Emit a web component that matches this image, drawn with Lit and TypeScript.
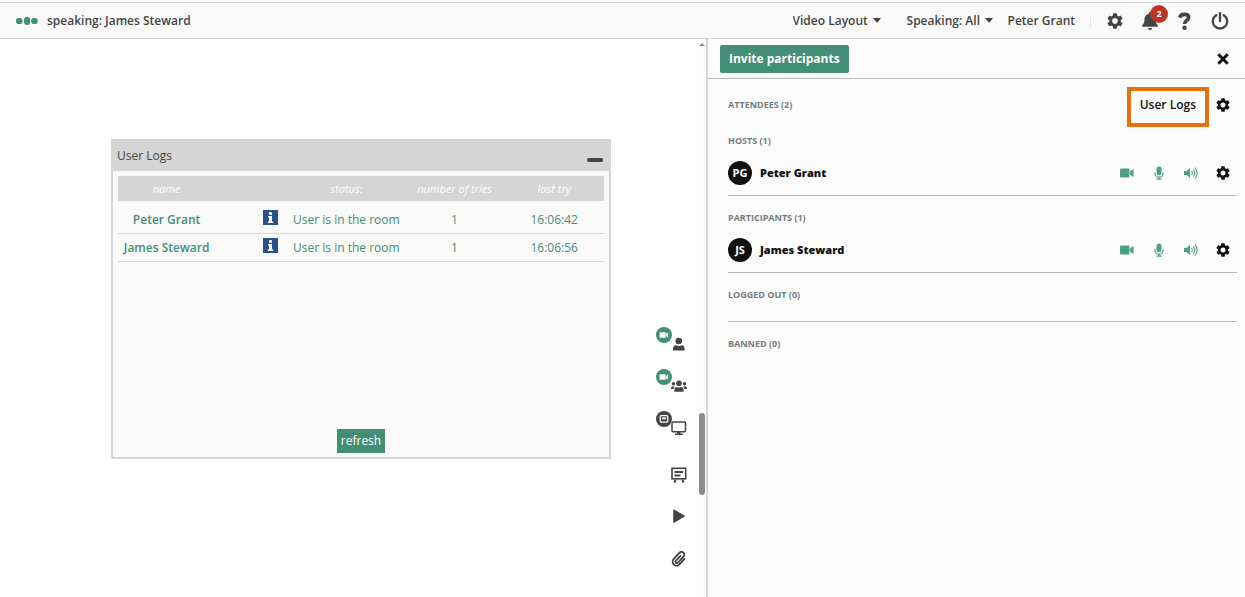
import { LitElement, html, svg, css, nothing } from "lit";
import { customElement, property } from "lit/decorators.js";

const GEAR = svg`<path d="M19.14 12.94c.04-.3.06-.61.06-.94 0-.32-.02-.64-.07-.94l2.03-1.58a.49.49 0 0 0 .12-.61l-1.92-3.32a.488.488 0 0 0-.59-.22l-2.39.96c-.5-.38-1.03-.7-1.62-.94l-.36-2.54a.484.484 0 0 0-.48-.41h-3.84c-.24 0-.43.17-.47.41l-.36 2.54c-.59.24-1.13.57-1.62.94l-2.39-.96c-.22-.08-.47 0-.59.22L2.74 8.87c-.12.21-.08.47.12.61l2.03 1.58c-.05.3-.09.63-.09.94s.02.64.07.94l-2.03 1.58a.49.49 0 0 0-.12.61l1.92 3.32c.12.22.37.29.59.22l2.39-.96c.5.38 1.03.7 1.62.94l.36 2.54c.05.24.24.41.48.41h3.84c.24 0 .44-.17.47-.41l.36-2.54c.59-.24 1.13-.56 1.62-.94l2.39.96c.22.08.47 0 .59-.22l1.92-3.32c.12-.22.07-.47-.12-.61l-2.01-1.58zM12 15.6c-1.98 0-3.6-1.62-3.6-3.6s1.62-3.6 3.6-3.6 3.6 1.62 3.6 3.6-1.62 3.6-3.6 3.6z"/>`;

const ICONS: Record<string, { box: string; art: unknown }> = {
  gear: { box: "2 2 20 20", art: GEAR },
  bell: {
    box: "0 0 16 18",
    art: svg`<path d="M8 0a1.2 1.2 0 0 1 1.2 1.2v.6C11.8 2.400 13.500 4.500 13.500 7.200c0 3.300.8 4.700 2.200 6 .5.500.2 1.600-.7 1.600H1c-.9 0-1.200-1.100-.7-1.600 1.400-1.300 2.200-2.700 2.200-6 0-2.700 1.700-4.800 4.300-5.400v-.6A1.200 1.200 0 0 1 8 0zM5.800 15.900h4.400a2.200 2.100 0 0 1-4.400 0z"/>`,
  },
  help: {
    box: "0 0 14 18",
    art: svg`<path d="M2.200 5.600C2.900 3.500 4.500 2.400 6.900 2.400c2.500 0 4.300 1.200 4.300 3.200 0 2.900-4.200 2.800-4.200 6.300" fill="none" stroke="currentColor" stroke-width="3.600"/><circle cx="7" cy="15.700" r="2.200"/>`,
  },
  power: {
    box: "0 0 18 18",
    art: svg`<path d="M5.200 3.200a7.200 7.200 0 1 0 7.600 0M9 1v8" fill="none" stroke="currentColor" stroke-width="2.300" stroke-linecap="round"/>`,
  },
  close: {
    box: "0 0 12 12",
    art: svg`<path d="M1.300 1.300l9.400 9.400M10.700 1.300l-9.400 9.400" stroke="currentColor" stroke-width="3"/>`,
  },
  dots: {
    box: "0 0 22 8",
    art: svg`<rect x="0" y="1" width="6.500" height="6" rx="2.800"/><rect x="8" y="0" width="6.200" height="8" rx="3"/><rect x="15.200" y="1" width="6.500" height="6" rx="2.800"/>`,
  },
  caret: { box: "0 0 8 5", art: svg`<path d="M0 0h8L4 5z"/>` },
  camera: {
    box: "0 0 16 16",
    art: svg`<rect x="1" y="3.500" width="9.500" height="9" rx="1"/><path d="M11 6.500l3.500-2.800v8.600l-3.500-2.800z"/>`,
  },
  mic: {
    box: "0 0 16 16",
    art: svg`<rect x="5.500" y="1.500" width="5" height="8.700" rx="2.500"/><path d="M4 7.500v.7a4 4 0 0 0 8 0v-.7M8 12v2M5.500 14.200h5" fill="none" stroke="currentColor" stroke-width="1.300"/>`,
  },
  speaker: {
    box: "0 0 16 16",
    art: svg`<path d="M1 6h2.600L7 3v10l-3.400-3H1z"/><path d="M8.500 6.200a2.400 2.400 0 0 1 0 3.600M10.200 4.300a5 5 0 0 1 0 7.400M11.900 2.600a7.500 7.500 0 0 1 0 10.800" fill="none" stroke="currentColor" stroke-width="1.100"/>`,
  },
  person: {
    box: "0 0 16 16",
    art: svg`<circle cx="7.800" cy="5" r="3.300"/><path d="M2 14.500v-2c0-2 1.300-3.300 3-3.300.8.600 1.700.8 2.800.8s2-.2 2.800-.8c1.700 0 3 1.300 3 3.300v2z"/>`,
  },
  people: {
    box: "0 0 16 16",
    art: svg`<circle cx="8" cy="5.200" r="2.800"/><path d="M3.400 13.800v-1.700c0-2 1-3.200 2.500-3.200.6.400 1.300.6 2.100.6s1.500-.2 2.100-.6c1.500 0 2.500 1.200 2.500 3.200v1.700z"/><circle cx="2.500" cy="5.800" r="1.700"/><circle cx="13.500" cy="5.800" r="1.700"/><path d="M0 10.900c0-1.600.6-2.600 1.600-2.600.7.400 1.600.4 2.300.1-.8.700-1.200 1.500-1.300 2.500zM16 10.900c0-1.600-.6-2.600-1.600-2.600-.7.400-1.600.4-2.300.1.800.7 1.200 1.500 1.300 2.500z"/>`,
  },
  monitor: {
    box: "0 0 16 16",
    art: svg`<rect x="1" y="2" width="13.500" height="9.800" rx="1" fill="none" stroke="currentColor" stroke-width="1.500"/><path d="M6.300 12h3v1.500h2.400V15H4v-1.500h2.300z"/>`,
  },
  board: {
    box: "0 0 16 16",
    art: svg`<rect x="1" y="1.300" width="13.700" height="10.500" fill="none" stroke="currentColor" stroke-width="1.600"/><path d="M3.500 5h8.700M3.500 8.500h6" stroke="currentColor" stroke-width="1.800"/><path d="M4.600 12.500L3.500 15.700M11.400 12.500l1.100 3.200" stroke="currentColor" stroke-width="2"/>`,
  },
  play: {
    box: "0 0 16 16",
    art: svg`<path d="M2.200 1.200c0-.7.500-.9 1-.6l10.200 6c.5.300.5.900 0 1.200l-10.200 6c-.5.300-1 .1-1-.6z"/>`,
  },
  clip: {
    box: "0 0 16 16",
    art: svg`<g transform="rotate(42 8 8)" fill="none" stroke="currentColor" stroke-width="1.800" stroke-linecap="round"><path d="M11.900 4.200v7.500a3.900 3.900 0 0 1-7.800 0V3.200a2.800 2.800 0 0 1 5.600 0v8.300a1.400 1.400 0 0 1-2.800 0V5"/></g>`,
  },
  screen: {
    box: "0 0 16 16",
    art: svg`<rect x="2" y="2.500" width="12" height="10.500" rx="2" fill="none" stroke="currentColor" stroke-width="2"/><path d="M5 5.500h6v3H5z"/>`,
  },
  info: {
    box: "0 0 15 15",
    art: svg`<rect width="15" height="15" fill="#27528a"/><g fill="#fff"><rect x="6" y="2" width="3" height="3" rx="1"/><path d="M5 6h4v5.500h1.200V13H4.800v-1.500H6v-4H5z"/></g>`,
  },
};

const icon = (name: string, cls: string) => html`<svg
  class="icon ${cls}"
  viewBox=${ICONS[name].box}
  fill="currentColor"
  aria-hidden="true"
>${ICONS[name].art}</svg>`;

const shared = css`
  * { box-sizing: border-box; }
  button, select {
    font: inherit;
    color: inherit;
    background: none;
    border: 0;
    margin: 0;
    padding: 0;
    cursor: pointer;
  }
  button { display: flex; align-items: center; justify-content: center; }
  .icon { display: block; flex: none; }
  .s16 { width: 16px; height: 16px; }
`;

@customElement("top-bar")
class TopBar extends LitElement {
  static styles = [shared, css`
    :host { display: block; padding-top: 2px; background: #fff; }
    .bar {
      display: flex;
      align-items: center;
      height: 37px;
      padding: 0 16px;
      background: #fafafa;
      border-top: 1px solid #dcdcdc;
      border-bottom: 1px solid #d0d0d0;
      font-weight: 600;
      color: #444;
    }
    .status { display: flex; align-items: center; gap: 9px; flex: 1; }
    .dots { width: 22px; height: 8px; color: #428e76; }
    .menu { display: flex; align-items: center; gap: 4px; margin-right: 26px; }
    .menu.last { margin-right: 15px; }
    select { appearance: none; }
    .caret { width: 8px; height: 5px; }
    .user { padding-right: 15px; border-right: 1px solid #e6e6e6; line-height: 12px; margin-right: 16px; }
    .tools { display: flex; align-items: center; gap: 19px; }
    .bell { position: relative; }
    .i-bell { width: 16px; height: 18px; }
    .i-help { width: 15px; height: 18px; }
    .i-power { width: 18px; height: 18px; }
    .count {
      position: absolute;
      left: 8px;
      top: -7px;
      width: 18px;
      height: 18px;
      border-radius: 50%;
      background: #bd3428;
      color: #fff;
      font-size: 9px;
      font-weight: 700;
      line-height: 18px;
      text-align: center;
    }
  `];

  render() {
    return html`<header class="bar">
      <div class="status">${icon("dots", "dots")}<span>speaking: James Steward</span></div>
      <div class="menu">
        <select aria-label="Video layout"><option>Video Layout</option></select>${icon("caret", "caret")}
      </div>
      <div class="menu last">
        <select aria-label="Speaking"><option>Speaking: All</option></select>${icon("caret", "caret")}
      </div>
      <div class="user">Peter Grant</div>
      <div class="tools">
        <button aria-label="Settings">${icon("gear", "s16")}</button>
        <button class="bell" aria-label="Notifications">${icon("bell", "i-bell")}<span class="count">2</span></button>
        <button aria-label="Help">${icon("help", "i-help")}</button>
        <button aria-label="Leave">${icon("power", "i-power")}</button>
      </div>
    </header>`;
  }
}

interface LogEntry { name: string; status: string; tries: number; last: string }

@customElement("user-logs-window")
class UserLogsWindow extends LitElement {
  @property({ attribute: false }) entries: LogEntry[] = [
    { name: "Peter Grant", status: "User is in the room", tries: 1, last: "16:06:42" },
    { name: "James Steward", status: "User is in the room", tries: 1, last: "16:06:56" },
  ];

  static styles = [shared, css`
    :host {
      display: flex;
      flex-direction: column;
      background: #fafafa;
      border: 2px solid #d5d5d5;
      color: #428e76;
    }
    .title {
      display: flex;
      justify-content: space-between;
      align-items: center;
      height: 30px;
      padding: 0 6px 0 4px;
      background: #d5d5d5;
      color: #444;
    }
    .name { font-size: 12px; font-weight: 400; margin: 0; }
    .minimise { width: 16px; height: 4px; margin-top: 8px; border-radius: 2px; background: #444; }
    .body { flex: 1; display: flex; flex-direction: column; padding: 5px 5px 4px; }
    table { width: 100%; table-layout: fixed; border-collapse: separate; border-spacing: 0; }
    .c-name { width: 20%; }
    .c-info { width: 15%; }
    .c-status { width: 24%; }
    th, td { padding: 0; text-align: center; white-space: nowrap; }
    thead th {
      height: 30px;
      background: #d5d5d5;
      border-bottom: 5px solid #fafafa;
      color: #fff;
      font-size: 11px;
      font-style: italic;
      font-weight: 400;
    }
    tbody th, tbody td { height: 28px; border-bottom: 1px solid #d5d5d5; font-weight: 400; }
    tbody th { font-weight: 600; }
    .info { width: 15px; height: 15px; margin: 0 10px 4px auto; }
    .i-info { width: 15px; height: 15px; }
    .refresh { margin: auto auto 0; height: 24px; padding: 0 4px; background: #428e76; color: #fff; }
  `];

  render() {
    return html`
      <div class="title">
        <h2 class="name">User Logs</h2>
        <button class="minimise" aria-label="Minimise"></button>
      </div>
      <div class="body">
        <table>
          <colgroup><col class="c-name" /><col class="c-info" /><col class="c-status" /><col /><col /></colgroup>
          <thead>
            <tr><th>name</th><th></th><th>status:</th><th>number of tries</th><th>last try</th></tr>
          </thead>
          <tbody>
            ${this.entries.map((e) => html`<tr>
              <th scope="row">${e.name}</th>
              <td><button class="info" aria-label="Details of ${e.name}">${icon("info", "i-info")}</button></td>
              <td>${e.status}</td>
              <td>${e.tries}</td>
              <td>${e.last}</td>
            </tr>`)}
          </tbody>
        </table>
        <button class="refresh">refresh</button>
      </div>`;
  }
}

@customElement("room-tools")
class RoomTools extends LitElement {
  private tools = [
    { icon: "person", label: "Host camera", badge: "camera", tone: "green" },
    { icon: "people", label: "Participant cameras", badge: "camera", tone: "green" },
    { icon: "monitor", label: "Screen sharing", badge: "screen", tone: "dark" },
    { icon: "board", label: "Whiteboard", badge: "", tone: "" },
    { icon: "play", label: "Media", badge: "", tone: "" },
    { icon: "clip", label: "Files", badge: "", tone: "" },
  ];

  static styles = [shared, css`
    :host {
      display: flex;
      flex-direction: column;
      justify-content: flex-end;
      padding: 0 10px 17px 0;
      color: #444;
    }
    .tool { position: relative; width: 16px; height: 42px; }
    .tool:nth-child(4) { margin-top: 5px; }
    .badge {
      position: absolute;
      left: -15px;
      top: 4px;
      width: 16px;
      height: 16px;
      border-radius: 50%;
      display: flex;
      align-items: center;
      justify-content: center;
      color: #fff;
    }
    .green { background: #428e76; }
    .dark { background: #444; }
    .mini { width: 10px; height: 10px; }
  `];

  render() {
    return this.tools.map((t) => html`<button class="tool" aria-label=${t.label}>
      ${icon(t.icon, "s16")}
      ${t.badge ? html`<span class="badge ${t.tone}">${icon(t.badge, "mini")}</span>` : nothing}
    </button>`);
  }
}

interface Person { name: string; initials: string }

@customElement("attendee-panel")
class AttendeePanel extends LitElement {
  private groups: { title: string; people: Person[] }[] = [
    { title: "HOSTS (1)", people: [{ name: "Peter Grant", initials: "PG" }] },
    { title: "PARTICIPANTS (1)", people: [{ name: "James Steward", initials: "JS" }] },
    { title: "LOGGED OUT (0)", people: [] },
    { title: "BANNED (0)", people: [] },
  ];

  static styles = [shared, css`
    :host { display: block; background: #fcfcfc; color: #111; }
    .head {
      display: flex;
      align-items: center;
      justify-content: space-between;
      height: 40px;
      padding: 0 16px 0 12px;
      border-bottom: 1px solid #b8b8b8;
    }
    .invite {
      height: 28px;
      padding: 0 9px;
      border-radius: 2px;
      background: #428e76;
      color: #fff;
      font-weight: 700;
    }
    .i-close { width: 12px; height: 12px; }
    .content { padding: 8px 8px 0 20px; }
    .label { margin: 0; font-size: 9px; line-height: 20px; font-weight: 700; color: #777b7e; }
    .summary { display: flex; align-items: flex-start; padding-right: 6px; }
    .summary .label { flex: 1; margin-top: 8px; }
    .logs {
      height: 40px;
      padding: 0 9px 4px;
      border: 4px solid #e8700f;
      font-weight: 600;
    }
    .more { margin: 10px 0 0 6px; }
    .group { padding-top: 12px; border-bottom: 1px solid #b4b6b8; }
    .group:nth-of-type(1) { padding-top: 4px; }
    .group:last-child { border: 0; }
    .group.empty { padding-bottom: 16px; }
    .person {
      display: flex;
      align-items: center;
      gap: 8px;
      padding: 10px 6px 10px 0;
    }
    .avatar {
      width: 24px;
      height: 24px;
      border-radius: 50%;
      background: #111;
      color: #fff;
      font-size: 11px;
      font-weight: 700;
      line-height: 24px;
      text-align: center;
    }
    .who { flex: 1; font-size: 11px; font-weight: 800; }
    .controls { display: flex; gap: 16px; }
    .on { color: #4f9f86; }
    .gear { width: 14px; height: 14px; margin: 1px; }
  `];

  render() {
    return html`
      <div class="head">
        <button class="invite">Invite participants</button>
        <button aria-label="Close">${icon("close", "i-close")}</button>
      </div>
      <div class="content">
        <div class="summary">
          <h2 class="label">ATTENDEES (2)</h2>
          <button class="logs">User Logs</button>
          <button class="more" aria-label="Attendee settings">${icon("gear", "gear")}</button>
        </div>
        ${this.groups.map((g) => html`<section class="group ${g.people.length ? "" : "empty"}">
          <h3 class="label">${g.title}</h3>
          ${g.people.map((p) => html`<div class="person">
            <span class="avatar">${p.initials}</span>
            <span class="who">${p.name}</span>
            <div class="controls">
              <button class="on" aria-label="Camera">${icon("camera", "s16")}</button>
              <button class="on" aria-label="Microphone">${icon("mic", "s16")}</button>
              <button class="on" aria-label="Sound">${icon("speaker", "s16")}</button>
              <button aria-label="Settings for ${p.name}">${icon("gear", "gear")}</button>
            </div>
          </div>`)}
        </section>`)}
      </div>`;
  }
}

@customElement("app-root")
class AppRoot extends LitElement {
  static styles = [shared, css`
    :host {
      display: flex;
      flex-direction: column;
      min-height: 100vh;
      background: #fff;
      font: 400 12px/16px "Open Sans", "Noto Sans", sans-serif;
    }
    .main { flex: 1; display: grid; grid-template-columns: minmax(0, 1fr) 539px; }
    .stage { position: relative; display: flex; justify-content: flex-end; }
    .window { position: absolute; left: 111px; top: 100px; width: 500px; height: 320px; }
    .scroll {
      display: flex;
      flex-direction: column;
      align-items: center;
      justify-content: space-between;
      width: 9px;
      padding: 4px 0 102px;
      background: #fcfcfc;
    }
    .arrow { border: 3px solid transparent; border-top: 0; border-bottom: 3px solid #888; }
    .thumb { width: 6px; height: 82px; border-radius: 3px; background: #8b8b8b; }
    .panel { border-left: 2px solid #d5d5d5; }
  `];

  render() {
    return html`
      <top-bar></top-bar>
      <main class="main">
        <div class="stage">
          <user-logs-window class="window"></user-logs-window>
          <room-tools></room-tools>
          <div class="scroll"><span class="arrow"></span><span class="thumb"></span></div>
        </div>
        <attendee-panel class="panel"></attendee-panel>
      </main>`;
  }
}
